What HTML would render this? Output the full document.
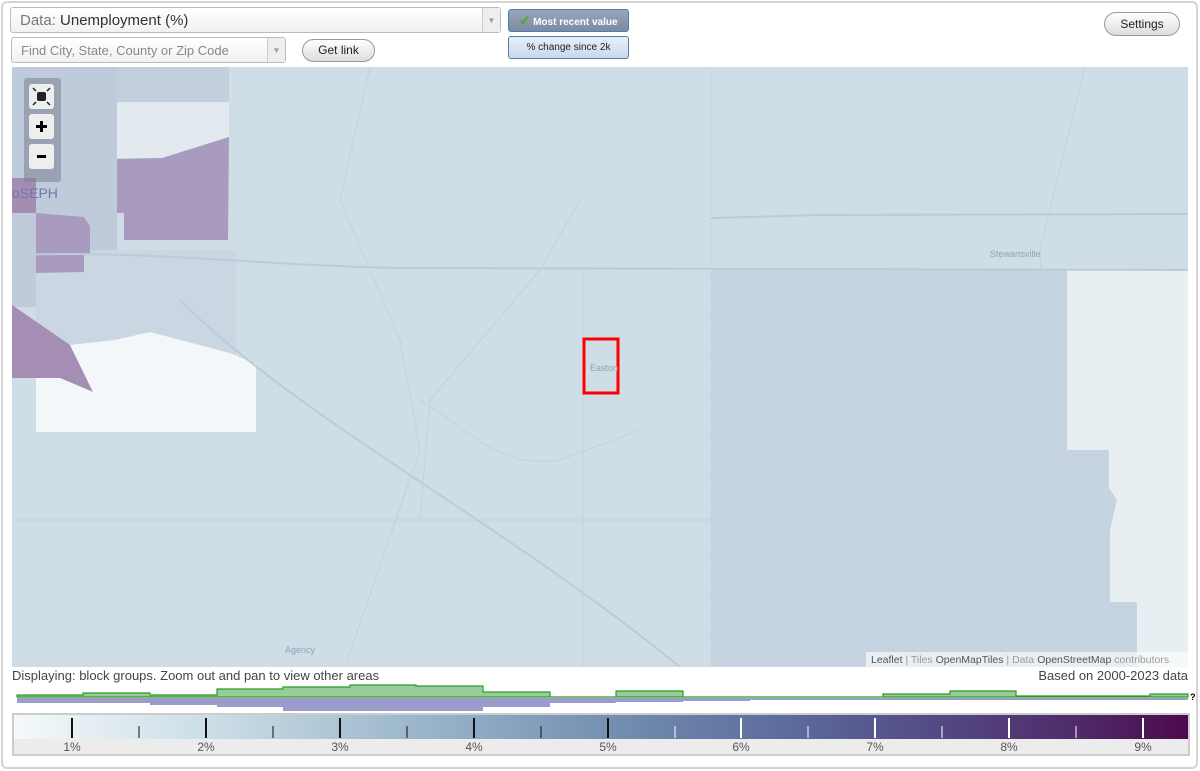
<!DOCTYPE html>
<html><head><meta charset="utf-8"><style>
*{box-sizing:border-box}
body{margin:0;width:1200px;height:771px;background:#fff;font-family:"Liberation Sans",Arial,sans-serif;position:relative;overflow:hidden}
.frame{position:absolute;left:1px;top:1px;width:1197px;height:768px;border:2px solid #d4d4d4;border-radius:6px;background:#fff}
.sel{position:absolute;background:linear-gradient(#fff,#f1f1f1);border:1px solid #bbb;border-radius:3px;color:#555}
.arr{position:absolute;right:0;top:0;bottom:0;width:18px;border-left:1px solid #ccc;background:#eee;color:#999;font-size:8px;text-align:center}
.btn{position:absolute;border:1px solid #999;border-radius:12px;background:linear-gradient(#fff,#ddd);font-size:12px;color:#222;text-align:center}
.tb{position:absolute;border:1px solid #4f7fb0;border-radius:3px;font-size:10px;text-align:center}
.lbl{position:absolute;top:740px;font-size:12px;color:#555;transform:translateX(-50%)}
</style></head><body>
<div class="frame"></div>
<div class="sel" style="left:10px;top:7px;width:491px;height:26px;font-size:15px;line-height:25px;padding-left:9px"><span style="color:#777">Data:</span> <span style="color:#333">Unemployment (%)</span><div class="arr" style="line-height:25px">▼</div></div>
<div class="sel" style="left:11px;top:37px;width:275px;height:26px;font-size:13px;line-height:25px;padding-left:9px;color:#888">Find City, State, County or Zip Code<div class="arr" style="line-height:25px">▼</div></div>
<div class="btn" style="left:302px;top:39px;width:73px;height:23px;line-height:21px">Get link</div>
<div class="tb" style="left:508px;top:9px;width:121px;height:23px;background:linear-gradient(#9aa6bb,#7c8aa3);color:#fff;font-weight:bold;line-height:21px;font-size:10px"><span style="color:#5a3;font-size:13px">✔</span> Most recent value</div>
<div class="tb" style="left:508px;top:36px;width:121px;height:23px;background:linear-gradient(#e8f0f8,#c8d8ea);color:#222;line-height:21px">% change since 2k</div>
<div class="btn" style="left:1104px;top:12px;width:76px;height:24px;line-height:22px">Settings</div>

<svg style="position:absolute;left:12px;top:67px" width="1176" height="600" viewBox="12 67 1176 600">
<rect x="12" y="67" width="1176" height="600" fill="#cfdde7"/>
<rect x="711" y="270" width="477" height="397" fill="#c6d4e1"/>
<rect x="12" y="67" width="105" height="240" fill="#bfcbdb"/>
<rect x="117" y="67" width="112" height="35" fill="#c3cfdd"/>
<rect x="36" y="250" width="200" height="110" fill="#cad6e2"/>
<polygon points="107,102 229,102 229,137 162,158 117,158 117,102" fill="#e2eaf0"/>
<polygon points="117,159 162,158 229,137 228,240 124,240 124,213 117,213" fill="#a99bbf"/>
<polygon points="36,213 84,217 90,226 90,255 84,255 84,272 36,273" fill="#a99bbf"/>
<rect x="12" y="178" width="24" height="35" fill="#a48cb3"/>
<polygon points="12,305 70,345 93,392 60,378 12,378" fill="#a48eb3"/>
<polygon points="70,345 115,340 150,332 230,353 256,364 256,432 36,432 36,378 60,378 93,392" fill="#f3f7f9"/>
<polygon points="1067,270 1188,270 1188,667 1137,667 1137,602 1110,602 1110,530 1117,500 1109,488 1109,450 1067,450" fill="#e8eff3"/>
<g stroke="#bccbd8" fill="none" stroke-width="2">
<path d="M12,255 C150,250 250,265 400,268 L1188,270"/>
<path d="M711,218 L820,215 L1188,214"/>
<path d="M180,300 C300,420 500,520 680,667"/>
</g>
<g stroke="#c3d1dc" fill="none" stroke-width="1">
<path d="M370,67 L340,200 L400,340 L420,450 L345,667"/>
<path d="M580,200 L540,270 L430,400 L420,520"/>
<path d="M711,67 L711,667" stroke-dasharray="3,2"/>
<path d="M1085,67 L1040,250 L1045,400 L1000,520 L975,667"/>
<path d="M420,400 C470,430 500,470 560,460 L640,430"/>
<path d="M583,270 L583,667 M12,520 L711,520"/>
</g>
<rect x="584" y="339" width="34" height="54" fill="none" stroke="#f00" stroke-width="3"/>
<text x="590" y="371" font-size="9" fill="#8fa3b7" font-family="Liberation Sans">Easton</text>
<text x="990" y="257" font-size="9" fill="#8fa3b7" font-family="Liberation Sans">Stewartsville</text>
<text x="285" y="653" font-size="9" fill="#8fa3b7" font-family="Liberation Sans">Agency</text>
<text x="12" y="198" font-size="14" fill="#6d7aa3" font-family="Liberation Sans">oSEPH</text>
<rect x="866" y="652" width="322" height="15" fill="rgba(255,255,255,.6)"/>
<text x="871" y="663" font-size="10.5" fill="#999" font-family="Liberation Sans"><tspan fill="#555">Leaflet</tspan> | Tiles <tspan fill="#555">OpenMapTiles</tspan> | Data <tspan fill="#555">OpenStreetMap</tspan> contributors</text>
<rect x="24" y="78" width="37" height="104" rx="3" fill="rgba(120,130,145,.55)"/>
<rect x="29" y="84" width="25" height="25" rx="3" fill="#eee"/>
<rect x="29" y="114" width="25" height="25" rx="3" fill="#eee"/>
<rect x="29" y="144" width="25" height="25" rx="3" fill="#eee"/>
<rect x="37" y="92" width="9" height="9" rx="2" fill="#222"/>
<path d="M33,88 l3,3 M50,88 l-3,3 M33,105 l3,-3 M50,105 l-3,-3" stroke="#222" stroke-width="1.5"/>
<path d="M41.5,121 v11 M36,126.5 h11" stroke="#000" stroke-width="3"/>
<path d="M37,156.5 h9" stroke="#000" stroke-width="3"/>
</svg>

<div style="position:absolute;left:12px;top:668px;font-size:13px;color:#444">Displaying: block groups. Zoom out and pan to view other areas</div>
<div style="position:absolute;right:12px;top:668px;font-size:13px;color:#444">Based on 2000-2023 data</div>

<svg style="position:absolute;left:0;top:680px" width="1200" height="34">
<path d="M17,17 V15 H83 V13 H150 V15 H217 V9 H283 V7 H350 V5 H416 V6 H483 V12 H550 V17 H616 V11 H683 V17 H883 V14 H950 V11 H1016 V16 H1150 V14 H1188 V17 Z" fill="#99cc99" stroke="#2a9a2a" stroke-width="1.2"/>
<path d="M17,18 V23 H150 V25 H217 V27 H283 V31 H483 V27 H550 V23 H616 V22 H683 V21 H750 V20 H1188 V18 Z" fill="#9c9ccc"/>
<text x="1190" y="20" font-size="9" font-weight="bold" font-family="Liberation Sans">?</text>
</svg>

<div style="position:absolute;left:12px;top:713px;width:1178px;height:43px;border:2px solid #ccc;background:#ececec"></div>
<div style="position:absolute;left:14px;top:715px;width:1174px;height:24px;background:linear-gradient(90deg,#f4f9fb 0%,#c9dbe4 18%,#a6c0d1 30%,#88a4bf 42%,#6b85ab 55%,#5d6a9d 66%,#544b85 78%,#4f2c6a 90%,#4c0a4d 100%)"></div>
<svg style="position:absolute;left:0;top:715px" width="1200" height="24">
<g stroke="#111" stroke-width="2"><path d="M72,3V23M206,3V23M340,3V23M474,3V23M608,3V23"/></g>
<g stroke="#111" stroke-width="1"><path d="M139,11V23M273,11V23M407,11V23M541,11V23"/></g>
<g stroke="#fff" stroke-width="2"><path d="M741,3V23M875,3V23M1009,3V23M1143,3V23"/></g>
<g stroke="#fff" stroke-width="1"><path d="M675,11V23M808,11V23M942,11V23M1076,11V23"/></g>
</svg>
<div class="lbl" style="left:72px">1%</div><div class="lbl" style="left:206px">2%</div><div class="lbl" style="left:340px">3%</div><div class="lbl" style="left:474px">4%</div><div class="lbl" style="left:608px">5%</div><div class="lbl" style="left:741px">6%</div><div class="lbl" style="left:875px">7%</div><div class="lbl" style="left:1009px">8%</div><div class="lbl" style="left:1143px">9%</div>
</body></html>
